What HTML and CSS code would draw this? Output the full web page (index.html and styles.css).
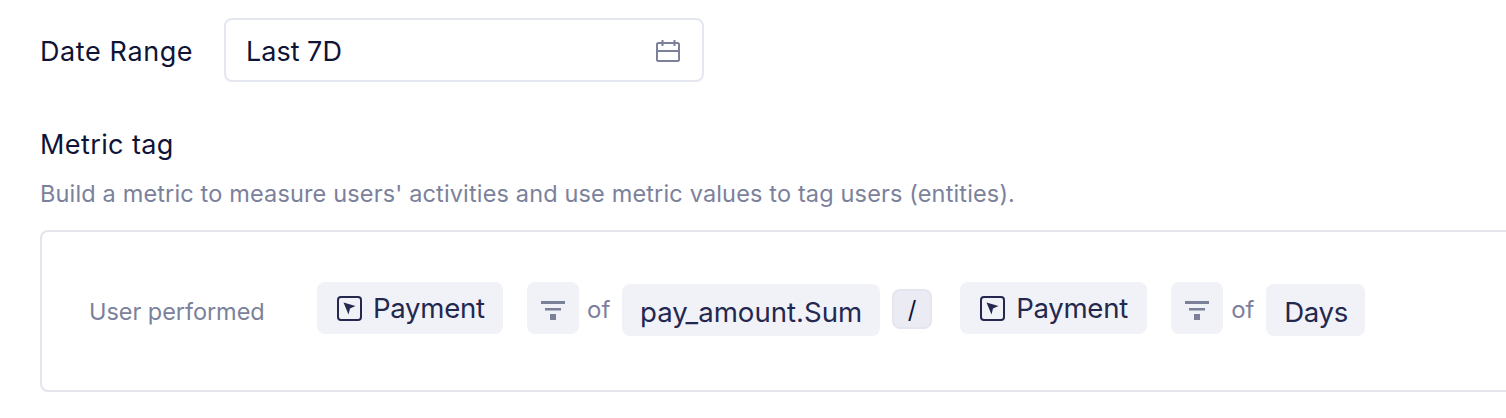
FILE: index.html
```html
<!DOCTYPE html>
<html lang="en">
<head>
<meta charset="utf-8">
<title>Metric tag</title>
<link rel="stylesheet" href="styles.css">
</head>
<body>
<main class="page">
  <div class="date-row">
    <span class="date-label">Date Range</span>
    <div class="date-field">
      <span>Last 7D</span>
      <svg class="cal" width="26" height="24" viewBox="0 0 26 24" fill="none" stroke="#7b8198" stroke-width="2"><rect x="2" y="5" width="22" height="18" rx="1.500"/><path d="M2 13H24M7.500 2V8M19.500 2V8"/></svg>
    </div>
  </div>
  <h2 class="title">Metric tag</h2>
  <p class="desc">Build a metric to measure users' activities and use metric values to tag users (entities).</p>
  <div class="box">
    <span class="lead">User performed</span>
    <div class="expr">
      <span class="pill event"><svg width="25" height="25" viewBox="0 0 25 25" fill="none"><rect x="1" y="1" width="23" height="23" rx="3" stroke="#24284f" stroke-width="2"/><path d="M6.500 6.500L18.500 10L13 12.500L11.500 18.500Z" fill="#24284f"/></svg>Payment</span>
      <span class="pill filter"><svg width="24" height="19" viewBox="0 0 24 19" fill="#7b8198"><rect x="0" y="0" width="24" height="3"/><rect x="4" y="7" width="16" height="2.500"/><rect x="9" y="13" width="6" height="6"/></svg></span>
      <span class="of">of</span>
      <span class="pill value">pay_amount.Sum</span>
      <span class="op">/</span>
      <span class="pill event second"><svg width="25" height="25" viewBox="0 0 25 25" fill="none"><rect x="1" y="1" width="23" height="23" rx="3" stroke="#24284f" stroke-width="2"/><path d="M6.500 6.500L18.500 10L13 12.500L11.500 18.500Z" fill="#24284f"/></svg>Payment</span>
      <span class="pill filter"><svg width="24" height="19" viewBox="0 0 24 19" fill="#7b8198"><rect x="0" y="0" width="24" height="3"/><rect x="4" y="7" width="16" height="2.500"/><rect x="9" y="13" width="6" height="6"/></svg></span>
      <span class="of">of</span>
      <span class="pill value days">Days</span>
    </div>
  </div>
</main>
</body>
</html>
```
FILE: styles.css
```css
* { box-sizing: border-box; }
html, body { margin: 0; padding: 0; background: #fff; overflow: hidden; }
body { width: 1506px; height: 418px; font-family: Inter, "Liberation Sans", sans-serif; color: #0f1437; }
.page { padding: 18px 0 0 40px; width: 1506px; }
.date-row { display: flex; align-items: center; gap: 32px; height: 64px; }
.date-label { width: 152px; flex: none; padding-top: 3px; font-size: 27px; letter-spacing: 0.600px; white-space: nowrap; }
.date-field { width: 480px; height: 64px; border: 2px solid #e4e7ef; border-radius: 8px; display: flex; align-items: center; justify-content: space-between; padding: 0 21px 0 20px; font-size: 27px; }
.date-field span { padding-top: 3px; }
.title { margin: 45px 0 0; font-size: 27px; line-height: 36px; font-weight: 400; letter-spacing: 0.400px; }
.desc { margin: 15px 0 0; font-size: 23.500px; line-height: 32px; color: #7b819b; letter-spacing: 0.150px; }
.box { margin: 20px 0 0; width: 1500px; height: 162px; border: 2px solid #e4e4ec; border-radius: 8px; display: flex; align-items: center; padding-left: 47px; }
.lead { width: 228px; font-size: 23.500px; letter-spacing: -0.050px; color: #7b819b; flex: none; }
.expr { display: flex; align-items: flex-start; height: 60px; }
.pill { display: inline-flex; align-items: center; background: #f1f2f8; border-radius: 8px; color: #24284f; font-size: 27.600px; height: 52px; flex: none; }
.event { width: 186px; padding-left: 20px; gap: 11px; margin: 1px 24px 0 0; letter-spacing: -0.300px; }
.event.second { width: 187px; }
.filter { width: 52px; justify-content: center; margin-top: 1px; }
.filter svg { margin-top: 5px; }
.of { width: 43px; padding-left: 8px; margin-top: 14px; font-size: 24px; line-height: 30px; color: #7b819b; }
.value { padding: 3px 18px 0; margin-top: 3px; }
.days { width: 99px; letter-spacing: -0.300px; }
.op { width: 40px; height: 40px; margin: 8px 28px 0 12px; background: #ebecf3; border: 2px solid #e4e5ee; border-radius: 8px; display: flex; align-items: center; justify-content: center; font-size: 24px; color: #0f1437; }
```
